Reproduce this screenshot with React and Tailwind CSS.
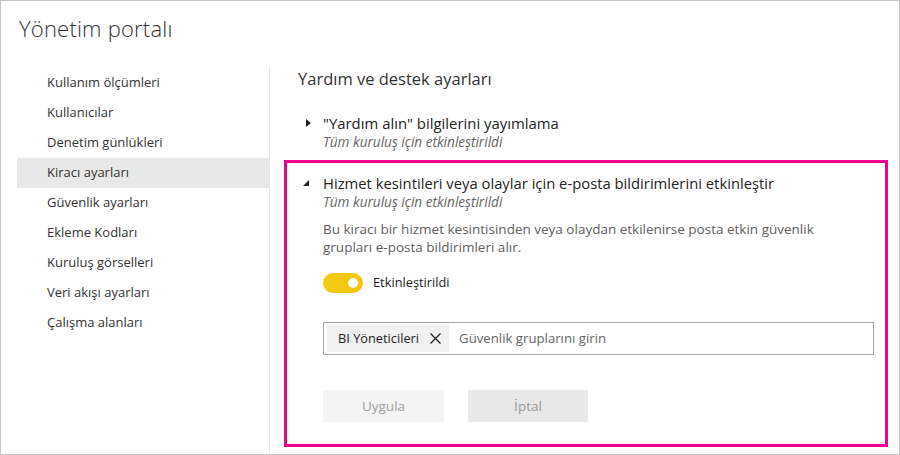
import React from "react";

const navItems = [
  "Kullanım ölçümleri",
  "Kullanıcılar",
  "Denetim günlükleri",
  "Kiracı ayarları",
  "Güvenlik ayarları",
  "Ekleme Kodları",
  "Kuruluş görselleri",
  "Veri akışı ayarları",
  "Çalışma alanları",
];

export default function App() {
  return (
    <div className="w-[900px] h-[455px] bg-white border border-[#c6c6c6] flex flex-col overflow-hidden text-[#252423] font-['Open_Sans',sans-serif]">
      <div className="h-[65px] pl-[18px] pt-[12px] text-[22px] font-light text-[#333] leading-[30px] tracking-[0.2px]">
        Yönetim portalı
      </div>
      <div className="flex flex-1">
        <nav className="w-[253px] ml-[16px] border-r border-[#e6e6e6] pt-[2px]">
          {navItems.map((item) => (
            <div
              key={item}
              className={
                "h-[30px] flex items-center pl-[30px] text-[13px] text-[#333] " +
                (item === "Kiracı ayarları" ? "bg-[#e8e8e8]" : "")
              }
            >
              {item}
            </div>
          ))}
        </nav>
        <main className="flex-1 pl-[14px] pr-[11px]">
          <div className="pl-[14px] text-[16.5px] text-[#333] h-[26px] leading-[26px]">
            Yardım ve destek ayarları
          </div>
          <div className="mt-[22px] pl-[22px] flex">
            <div className="w-[17px] pt-[5px]">
              <svg width="5" height="8" viewBox="0 0 5 8">
                <path d="M0 0 L5 4 L0 8 Z" fill="#252423" />
              </svg>
            </div>
            <div>
              <div className="text-[14.9px] leading-[18px] text-[#252423]">
                "Yardım alın" bilgilerini yayımlama
              </div>
              <div className="text-[13.6px] italic text-[#666] leading-[19px]">
                Tüm kuruluş için etkinleştirildi
              </div>
            </div>
          </div>
          <section className="mt-[9px] border-[3px] border-[#ec008c] h-[287px] pl-[16px] pt-[11px]">
            <div className="flex">
              <div className="w-[20px] pt-[6px]">
                <svg width="6" height="6" viewBox="0 0 6 6">
                  <path d="M6 0 L6 6 L0 6 Z" fill="#252423" />
                </svg>
              </div>
              <div className="flex-1">
                <div className="text-[14.8px] leading-[18px] text-[#252423]">
                  Hizmet kesintileri veya olaylar için e-posta bildirimlerini etkinleştir
                </div>
                <div className="text-[13.6px] italic text-[#666] leading-[19px]">
                  Tüm kuruluş için etkinleştirildi
                </div>
                <p className="mt-[9px] text-[13.5px] leading-[18px] text-[#605e5c] w-[500px]">
                  Bu kiracı bir hizmet kesintisinden veya olaydan etkilenirse posta etkin güvenlik
                  grupları e-posta bildirimleri alır.
                </p>
                <div className="mt-[17px] flex items-center">
                  <div className="w-[40px] h-[20px] rounded-full bg-[#f2c811] flex items-center justify-end pr-[5px]">
                    <div className="w-[10px] h-[10px] rounded-full bg-white" />
                  </div>
                  <span className="ml-[10px] text-[12.8px] text-[#252423]">Etkinleştirildi</span>
                </div>
                <div className="mt-[29px] w-[551px] h-[33px] border border-[#a6a6a6] flex items-center pl-[3px]">
                  <div className="h-[27px] bg-[#f0f0f0] flex items-center pl-[11px] pr-[8px] text-[12.8px] text-[#252423]">
                    BI Yöneticileri
                    <svg width="11" height="11" viewBox="0 0 11 11" className="ml-[11px]">
                      <path d="M0.5 0.5 L10.5 10.5 M10.5 0.5 L0.5 10.5" stroke="#252423" strokeWidth="1.3" />
                    </svg>
                  </div>
                  <span className="ml-[10px] text-[13.2px] text-[#666]">Güvenlik gruplarını girin</span>
                </div>
                <div className="mt-[35px] flex gap-[24px]">
                  <div className="w-[121px] h-[32px] bg-[#f4f4f4] flex items-center justify-center text-[13.5px] text-[#a0a0a0]">
                    Uygula
                  </div>
                  <div className="w-[120px] h-[32px] bg-[#e8e8e8] flex items-center justify-center text-[13.5px] text-[#999]">
                    İptal
                  </div>
                </div>
              </div>
            </div>
          </section>
        </main>
      </div>
    </div>
  );
}
